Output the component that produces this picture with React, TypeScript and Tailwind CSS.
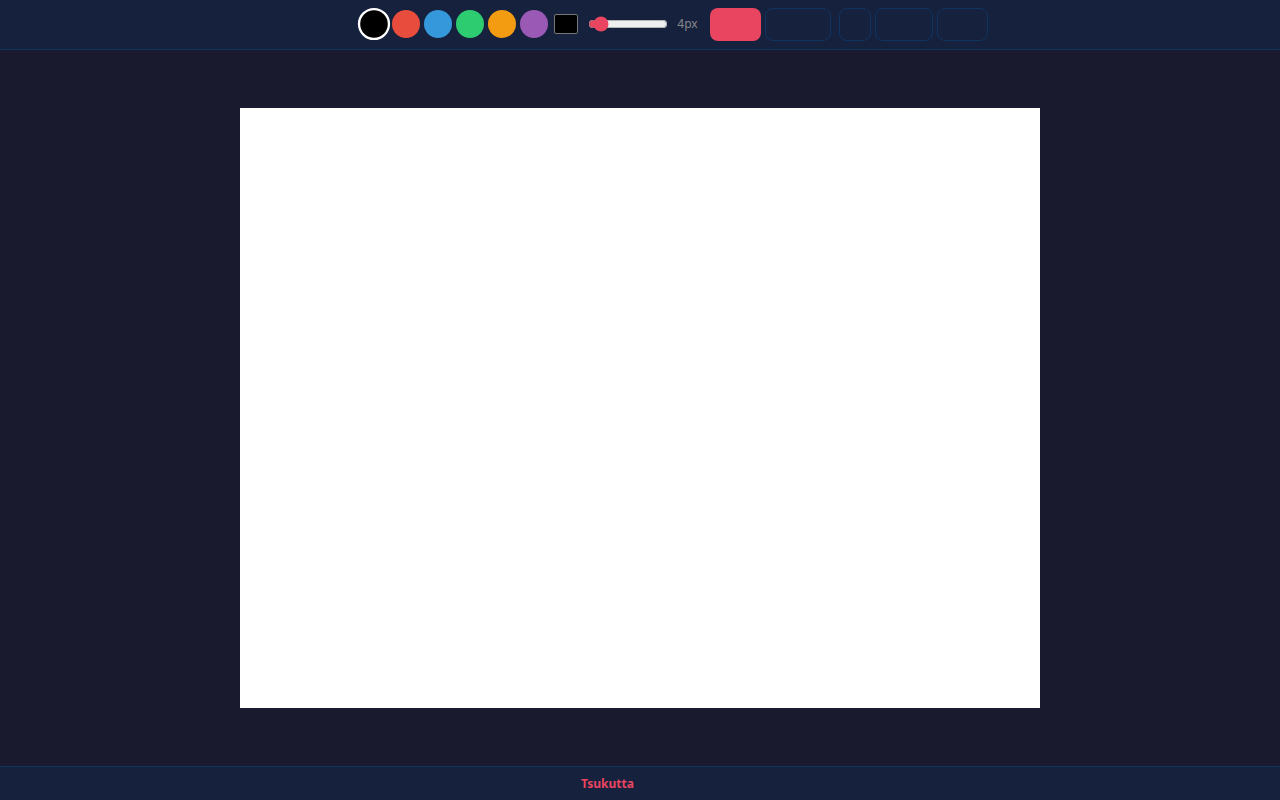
import { useState } from 'react';

const COLORS = ['#000000', '#e74c3c', '#3498db', '#2ecc71', '#f39c12', '#9b59b6'];

export default function App() {
  const [color, setColor] = useState('#000000');
  const [size, setSize] = useState(4);

  return (
    <div className="flex flex-col h-screen bg-[#1a1a2e] font-['Noto_Sans',sans-serif]">
      {/* Toolbar */}
      <header className="h-[50px] shrink-0 bg-[#16213e] border-b border-[#0f3460] flex items-center justify-center pl-[68px] pb-px">
        <div className="flex items-center gap-1">
          {COLORS.map((c) => (
            <button
              key={c}
              onClick={() => setColor(c)}
              className={`w-7 h-7 rounded-full border-2 ${
                color === c ? 'border-white scale-[1.15]' : 'border-transparent'
              }`}
              style={{ backgroundColor: c }}
            />
          ))}
        </div>
        <div className="ml-1.5 w-6 h-5 bg-black border border-[#777] rounded-[2px]" style={{ backgroundColor: color }} />
        <input
          type="range"
          min={1}
          max={40}
          value={size}
          onChange={(e) => setSize(Number(e.target.value))}
          className="ml-2.5 w-20 accent-[#e94560]"
        />
        <span className="ml-[9px] text-[12px] text-[#888]">{size}px</span>
        <div className="ml-[12px] flex items-center">
          <button className="w-[51px] h-[33px] rounded-lg bg-[#e94560]" />
          <button className="ml-1 w-[66px] h-[33px] rounded-lg border border-[#0f3460]" />
          <button className="ml-2 w-8 h-[33px] rounded-lg border border-[#0f3460]" />
          <button className="ml-1 w-[58px] h-[33px] rounded-lg border border-[#0f3460]" />
          <button className="ml-1 w-[51px] h-[33px] rounded-lg border border-[#0f3460]" />
        </div>
      </header>

      {/* Canvas */}
      <main className="flex-1 flex items-center justify-center">
        <div className="w-[800px] h-[600px] bg-white" />
      </main>

      {/* Footer */}
      <footer className="h-[34px] shrink-0 bg-[#16213e] border-t border-[#0f3460] flex items-center justify-center pr-[65px]">
        <span className="text-[12px] font-bold text-[#e94560]">Tsukutta</span>
      </footer>
    </div>
  );
}
